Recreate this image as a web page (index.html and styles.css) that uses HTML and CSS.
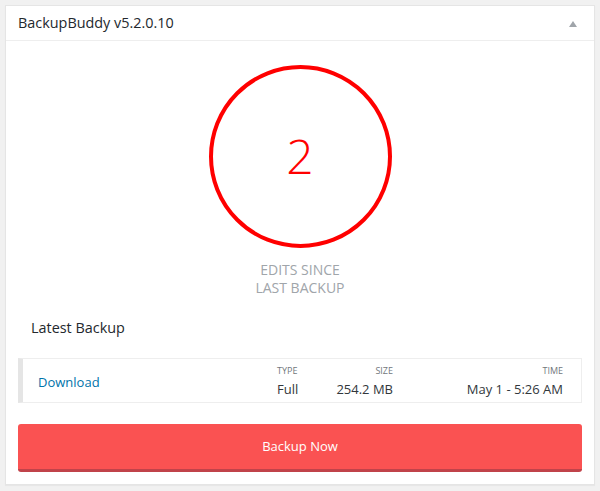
FILE: index.html
```html
<!DOCTYPE html>
<html>
<head>
<meta charset="utf-8">
<link rel="stylesheet" href="styles.css">
</head>
<body>
<div class="panel">
  <div class="header">
    <h2 class="title">BackupBuddy v5.2.0.10</h2>
    <span class="toggle"></span>
  </div>
  <div class="body">
    <div class="stat">
      <div class="ring"><span class="count">2</span></div>
      <div class="stat-label">Edits since<br>last backup</div>
    </div>
    <h3 class="section">Latest Backup</h3>
    <div class="backup">
      <a class="download" href="#">Download</a>
      <div class="cell cell-left"><span class="lbl">Type</span><span class="val">Full</span></div>
      <div class="cell"><span class="lbl">Size</span><span class="val">254.2 MB</span></div>
      <div class="cell"><span class="lbl">Time</span><span class="val">May 1 - 5:26 AM</span></div>
    </div>
    <button class="btn">Backup Now</button>
  </div>
</div>
</body>
</html>
```
FILE: styles.css
```css
html, body {
  margin: 0;
  padding: 0;
  background: #f1f1f1;
}
body {
  padding: 5px 5px;
  font-family: "Open Sans", "Noto Sans", sans-serif;
  color: #23282d;
}
.panel {
  width: 590px;
  box-sizing: border-box;
  background: #fff;
  border: 1px solid #e5e5e5;
  box-shadow: 0 1px 1px rgba(0,0,0,0.04);
}
.header {
  height: 34px;
  border-bottom: 1px solid #eee;
  display: flex;
  align-items: center;
  justify-content: space-between;
  padding: 0 17px 0 12px;
}
.title {
  margin: 0;
  font-size: 14.4px;
  font-weight: 400;
  line-height: 1.4;
}
.toggle {
  width: 0;
  height: 0;
  border-left: 4px solid transparent;
  border-right: 4px solid transparent;
  border-bottom: 6px solid #a0a5aa;
  margin-top: 1px;
}
.body {
  padding: 0 12px 12px;
}
.stat {
  display: flex;
  flex-direction: column;
  align-items: center;
}
.ring {
  margin-top: 24px;
  width: 183px;
  height: 183px;
  box-sizing: border-box;
  border: 4px solid #f00;
  border-radius: 50%;
  display: flex;
  align-items: center;
  justify-content: center;
}
.count {
  color: #f00;
  font-size: 48px;
  font-weight: 300;
  line-height: 1;
  margin-top: -1px;
}
.stat-label {
  margin-top: 13px;
  text-transform: uppercase;
  font-size: 14px;
  line-height: 18px;
  color: #a0a5aa;
  text-align: center;
}
.section {
  margin: 22px 0 0 13px;
  font-size: 14.4px;
  font-weight: 400;
  line-height: 18px;
}
.backup {
  margin-top: 21px;
  border: 1px solid #eee;
  border-left: 5px solid #e5e5e5;
  padding: 6px 17px 4px 15px;
  display: grid;
  grid-template-columns: 239px 50px 66px 170px;
  align-items: center;
}
.download {
  color: #0073aa;
  text-decoration: none;
  font-size: 13px;
  line-height: 18px;
}
.cell {
  display: flex;
  flex-direction: column;
  align-items: flex-end;
}
.cell-left {
  align-items: flex-start;
}
.lbl {
  font-size: 9px;
  line-height: 12px;
  text-transform: uppercase;
  color: #72777c;
  margin-bottom: 3px;
}
.val {
  font-size: 13px;
  line-height: 18px;
  color: #32373c;
}
.btn {
  display: block;
  width: 100%;
  margin-top: 21px;
  height: 48px;
  border: 0;
  border-bottom: 3px solid #c0434a;
  border-radius: 3px;
  background: #fa5252;
  color: #fff;
  font-family: "Open Sans", "Noto Sans", sans-serif;
  font-size: 13px;
  padding: 0 0 2px;
  cursor: pointer;
}
```
